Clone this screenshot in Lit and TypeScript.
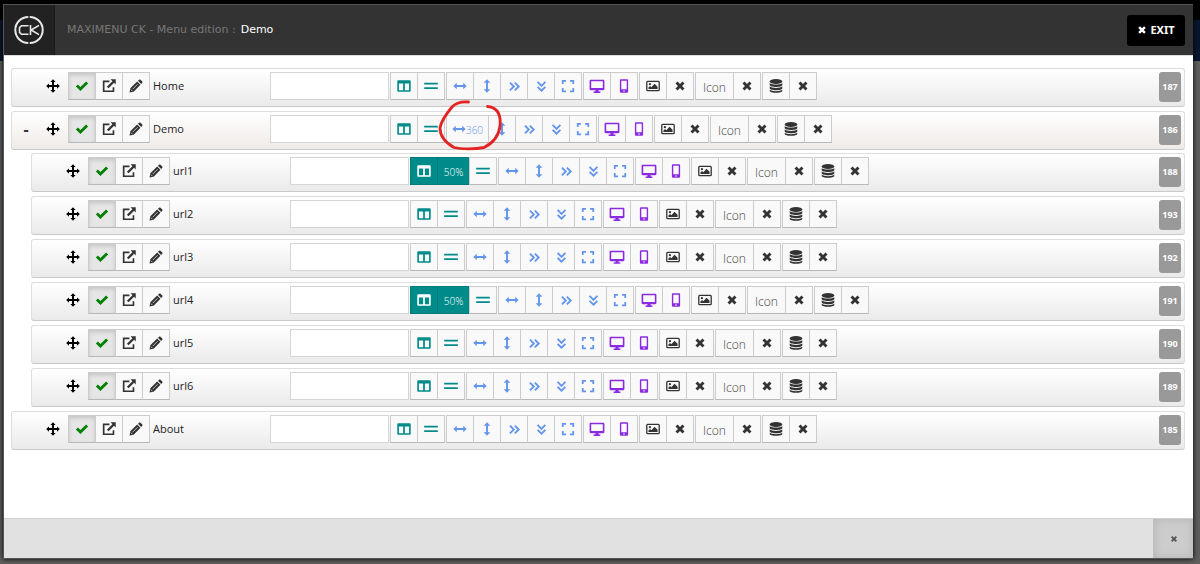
import { LitElement, html, svg, css, nothing } from "lit";
import { customElement, property } from "lit/decorators.js";

const ICONS: Record<string, any> = {
  move: svg`<path d="M8 0.2L11 3.4H9.100v3.500h3.500V5L15.800 8l-3.200 3V9.100H9.100v3.500H11L8 15.800 5 12.600h1.900V9.100H3.400V11L0.200 8l3.200-3v1.900h3.500V3.400H5z"/>`,
  check: svg`<path d="M1 8.600L3.300 6.300 6.200 9.100 12.700 2.800 15 5.100 6.200 13.800z"/>`,
  open: svg`<path d="M8.500 2.800H1.900v11.200h11.200V9.500" fill="none" stroke="currentColor" stroke-width="1.900"/><path d="M9.800 0.400h5.900v5.900l-1.900-1.900-6.300 6.300-1.900-1.900 6.300-6.300z"/>`,
  edit: svg`<path d="M.6 15.400l.9-4.700 7.800-7.800 3.800 3.800-7.800 7.800zM10.200 2.100l1.100-1.100c.6-.6 1.400-.6 2 0l1.700 1.700c.6.6.6 1.400 0 2l-1.100 1.100z"/><path d="M4.200 11.600l5.600-5.600" stroke="#f9f9f9" stroke-width=".8"/><path d="M2 12l2 2" stroke="#f9f9f9" stroke-width=".8"/>`,
  columns: svg`<path fill-rule="evenodd" d="M1.700 1.400h12.600c.8 0 1.400.6 1.400 1.400v10.400c0 .8-.6 1.400-1.400 1.400H1.700c-.8 0-1.400-.6-1.400-1.400V2.800c0-.8.6-1.400 1.400-1.400zM2.200 5v7.800h4.800V5zM9 5v7.800h4.800V5z"/>`,
  rows: svg`<path d="M.2 4.400h15.600v2H.2zM.2 9.400h15.600v2H.2z"/>`,
  width: svg`<path d="M.4 8l3.900-3.800v2.700h7.400V4.200L15.600 8l-3.900 3.800V9.100H4.300v2.700z"/>`,
  height: svg`<path d="M8 .4l3.800 3.900H9.100v7.400h2.700L8 15.600l-3.800-3.900h2.700V4.300H4.200z"/>`,
  right: svg`<path d="M2.400 3.200L7.200 8l-4.800 4.800M8.400 3.200L13.200 8l-4.800 4.800" fill="none" stroke="currentColor" stroke-width="2.300"/>`,
  down: svg`<path d="M3.200 2.400L8 7.200l4.800-4.800M3.200 8.400L8 13.200l4.800-4.800" fill="none" stroke="currentColor" stroke-width="2.300"/>`,
  expand: svg`<path d="M2 5.700V2h3.700M10.300 2H14v3.700M14 10.300V14h-3.700M5.700 14H2v-3.700" fill="none" stroke="currentColor" stroke-width="2"/>`,
  desktop: svg`<path fill-rule="evenodd" d="M1.300.8h13.400c.7 0 1.200.5 1.200 1.200v8.700c0 .7-.5 1.200-1.200 1.200H9.500l.4 1.500h1.700v1.400H4.400v-1.400h1.700l.4-1.500H1.300C.6 11.900.1 11.400.1 10.700V2C.1 1.300.6.8 1.300.8zM1.800 2.400v7.200h12.400V2.400z"/>`,
  mobile: svg`<path fill-rule="evenodd" d="M4.800.3h6.400c.9 0 1.500.6 1.500 1.500v12.400c0 .9-.6 1.500-1.500 1.500H4.800c-.9 0-1.500-.6-1.500-1.500V1.800c0-.9.6-1.500 1.500-1.500zM4.900 2v9.800h6.200V2zM8 12.800a.9.9 0 100 1.800.9.9 0 000-1.800z"/>`,
  image: svg`<rect x=".9" y="2.700" width="14.200" height="10.600" rx="1" fill="none" stroke="currentColor" stroke-width="1.500"/><circle cx="4.500" cy="5.900" r="1.300"/><path d="M2.800 11.500V9.800l1.900-1.700 1.400 1.300 3.700-3.900 3.400 3.400v2.600z"/>`,
  times: svg`<path d="M2 4.700L4.700 2 8 5.300 11.300 2 14 4.700 10.700 8l3.300 3.300-2.700 2.700L8 10.700 4.700 14 2 11.300 5.300 8z"/>`,
  database: svg`<ellipse cx="8" cy="2.900" rx="7.200" ry="2.800"/><path d="M.8 4.900c2 2 12.400 2 14.400 0v2c0 3-14.400 3-14.400 0zM.8 8.700c2 2 12.400 2 14.400 0v2c0 3-14.400 3-14.400 0zM.8 12.400c2 2 12.400 2 14.400 0v1c0 3.200-14.400 3.200-14.400 0z"/>`,
};

const icon = (name: string) =>
  html`<svg class="icon ${name}" viewBox="0 0 16 16" fill="currentColor" aria-hidden="true">${ICONS[name]}</svg>`;

interface Item {
  id: number;
  title: string;
  column?: string;
  width?: string;
  children?: Item[];
}

const ITEMS: Item[] = [
  { id: 187, title: "Home" },
  {
    id: 186,
    title: "Demo",
    width: "360",
    children: [
      { id: 188, title: "url1", column: "50%" },
      { id: 193, title: "url2" },
      { id: 192, title: "url3" },
      { id: 191, title: "url4", column: "50%" },
      { id: 190, title: "url5" },
      { id: 189, title: "url6" },
    ],
  },
  { id: 185, title: "About" },
];

@customElement("menu-row")
class MenuRow extends LitElement {
  @property({ attribute: false }) item!: Item;

  static styles = css`
    :host {
      display: block;
    }
    .row {
      box-sizing: border-box;
      height: 39px;
      padding: 3px 3px 0 6px;
      display: flex;
      align-items: flex-start;
      border: 1px solid #dedede;
      border-bottom-color: #c9c9c9;
      border-radius: 3px;
      background: linear-gradient(#fff, #eaeaea);
    }
    .row.parent {
      background: linear-gradient(#fff, #efebe8);
    }
    button,
    input {
      box-sizing: border-box;
      margin: 0;
      font-family: "Open Sans", "Noto Sans", sans-serif;
    }
    .toggle {
      width: 16px;
      height: 28px;
      padding: 0;
      border: 0;
      background: none;
      font-size: 16px;
      font-weight: 700;
      color: #333;
    }
    .toggle.empty {
      visibility: hidden;
    }
    .grip {
      width: 16px;
      height: 28px;
      margin-left: 11px;
      padding: 0;
      border: 0;
      background: none;
      display: grid;
      place-items: center;
      color: #000;
    }
    .group {
      display: flex;
      flex: none;
    }
    .status {
      margin-left: 7px;
    }
    .btn {
      width: 28px;
      height: 28px;
      padding: 0;
      border: 1px solid #ccc;
      border-bottom-color: #b8b8b8;
      background: #f9f9f9;
      display: flex;
      align-items: center;
      justify-content: center;
      font-size: 11px;
      font-weight: 300;
      color: #333;
    }
    .btn + .btn {
      margin-left: -1px;
    }
    .btn.on {
      background: #e6e6e6;
      box-shadow: inset 0 2px 4px rgba(0, 0, 0, 0.15);
      color: green;
    }
    .btn.teal {
      color: #008b8b;
    }
    .btn.blue {
      color: #6495ed;
    }
    .btn.wide {
      width: 43px;
    }
    .btn.purple {
      color: #8a2be2;
    }
    .btn.filled {
      background: #008b8b;
      border-color: #007a7a;
      color: #fff;
    }
    .btn.size {
      width: 33px;
      padding-top: 2px;
      font-size: 10px;
    }
    .btn.label {
      width: 39px;
      padding-top: 2px;
      font-size: 12px;
      color: #444;
    }
    .value {
      padding-top: 2px;
      font-size: 10px;
    }
    .title {
      box-sizing: border-box;
      width: 120px;
      padding-left: 3px;
      font: 11px/28px "Open Sans", "Noto Sans", sans-serif;
      color: #222;
    }
    .desc {
      width: 119px;
      height: 28px;
      border: 1px solid #d5d5d5;
      background: #fff;
      padding: 0 6px;
      font-size: 11px;
    }
    .tools {
      display: flex;
      gap: 1px;
      margin-left: 1px;
    }
    .badge {
      box-sizing: border-box;
      flex: none;
      width: 22px;
      height: 30px;
      margin-left: auto;
      border-radius: 3px;
      background: #999;
      color: #fff;
      font: 700 9px/30px "Open Sans", "Noto Sans", sans-serif;
      text-align: center;
    }
    .icon {
      width: 14px;
      height: 14px;
      flex: none;
      display: block;
    }
    .icon.desktop {
      width: 16px;
      height: 15px;
    }
    .icon.times {
      width: 12px;
      height: 12px;
    }
    .icon.right,
    .icon.down {
      width: 13px;
      height: 13px;
    }
  `;

  private btn(name: string, label: string, tone = "") {
    return html`<button class="btn ${tone}" aria-label=${label}>${icon(name)}</button>`;
  }

  render() {
    const { id, title, column, width, children } = this.item;
    return html`
      <div class="row ${children ? "parent" : ""}">
        <button class="toggle ${children ? "" : "empty"}" aria-label="Collapse">-</button>
        <button class="grip" aria-label="Move">${icon("move")}</button>
        <div class="group status">
          ${this.btn("check", "Published", "on")} ${this.btn("open", "Open")}
          ${this.btn("edit", "Edit")}
        </div>
        <label class="title" for="desc">${title}</label>
        <input class="desc" id="desc" type="text" />
        <div class="tools">
          <div class="group">
            ${this.btn("columns", "Column", column ? "filled" : "teal")}
            ${column ? html`<button class="btn filled size">${column}</button>` : nothing}
            ${this.btn("rows", "New row", "teal")}
          </div>
          <div class="group">
            <button class="btn blue ${width ? "wide" : ""}" aria-label="Width">
              ${icon("width")}${width ? html`<span class="value">${width}</span>` : nothing}
            </button>
            ${this.btn("height", "Height", "blue")} ${this.btn("right", "Left margin", "blue")}
            ${this.btn("down", "Top margin", "blue")} ${this.btn("expand", "Full width", "blue")}
          </div>
          <div class="group">
            ${this.btn("desktop", "Desktop", "purple")} ${this.btn("mobile", "Mobile", "purple")}
          </div>
          <div class="group">
            ${this.btn("image", "Image")} ${this.btn("times", "Remove image")}
          </div>
          <div class="group">
            <button class="btn label">Icon</button>
            ${this.btn("times", "Remove icon")}
          </div>
          <div class="group">
            ${this.btn("database", "Module")} ${this.btn("times", "Remove module")}
          </div>
        </div>
        <span class="badge">${id}</span>
      </div>
    `;
  }
}

@customElement("app-root")
class AppRoot extends LitElement {
  static styles = css`
    :host {
      display: block;
      box-sizing: border-box;
      height: 100vh;
      padding: 4px 7px 5px 3px;
      background: linear-gradient(#000 20px, #0a1630 20px, #0a1630 61px, #605f5d 61px);
      font-family: "Open Sans", "Noto Sans", sans-serif;
    }
    .modal {
      position: relative;
      box-sizing: border-box;
      height: 100%;
      display: flex;
      flex-direction: column;
      border: 1px solid #555;
      border-right-width: 0;
      background: #fff;
      box-shadow: 0 0 5px #000;
    }
    header {
      flex: none;
      height: 51px;
      display: flex;
      align-items: center;
      background: #333;
      border-bottom: 1px solid #ddd;
      box-sizing: border-box;
      padding-right: 8px;
    }
    .logo {
      width: 51px;
      align-self: stretch;
      display: grid;
      place-items: center;
      background: #222;
      border-right: 1px solid #1a1a1a;
      box-sizing: border-box;
    }
    h1 {
      margin: 0 0 0 12px;
      font: 11px/16px "DejaVu Sans", sans-serif;
      color: #777;
      display: flex;
      gap: 5px;
    }
    .current {
      color: #fff;
    }
    .exit {
      margin-left: auto;
      width: 58px;
      height: 31px;
      padding: 0;
      border: 0;
      border-radius: 3px;
      background: #000;
      color: #fff;
      display: flex;
      align-items: center;
      justify-content: center;
      gap: 3px;
      font: 700 11px/16px "Noto Sans", sans-serif;
    }
    .exit .icon {
      width: 10px;
      height: 10px;
    }
    main {
      flex: 1;
      min-height: 0;
      padding: 12px 8px 0 7px;
      overflow: hidden;
    }
    ul {
      list-style: none;
      margin: 0;
      padding: 0;
      display: flex;
      flex-direction: column;
      gap: 4px;
    }
    .nested {
      margin-top: 3px;
      padding-left: 20px;
    }
    footer {
      box-sizing: border-box;
      flex: none;
      height: 40px;
      display: flex;
      justify-content: flex-end;
      background: #e1e1e1;
      border-top: 1px solid #d0d0d0;
    }
    .close {
      width: 40px;
      padding: 0;
      border: 0;
      border-left: 1px solid #c0c0c0;
      background: #ccc;
      box-shadow: inset 0 0 8px rgba(0, 0, 0, 0.12);
      display: grid;
      place-items: center;
      color: #555;
    }
    .close .icon {
      width: 8px;
      height: 8px;
    }
    .mark {
      position: absolute;
      left: 434px;
      top: 93px;
      width: 66px;
      height: 60px;
      pointer-events: none;
    }
  `;

  private list(items: Item[], nested = false): unknown {
    return html`<ul class=${nested ? "nested" : ""}>
      ${items.map(
        (item) => html`<li>
          <menu-row .item=${item}></menu-row>
          ${item.children ? this.list(item.children, true) : nothing}
        </li>`
      )}
    </ul>`;
  }

  render() {
    return html`
      <div class="modal">
        <header>
          <div class="logo">
            <svg width="30" height="30" viewBox="0 0 30 30" fill="none" stroke="#e8e8e8" stroke-width="2">
              <path d="M14.300 2A13 13 0 0 0 14.300 28M15.700 28A13 13 0 0 0 15.700 2" />
              <path d="M14.500 10.700H7.500L5.500 12.700V17.300L7.500 19.300H14.500M16.500 10V20M25 10.400L18 14.500V15.500L25 19.600" stroke-width="1.600" />
            </svg>
          </div>
          <h1><span>MAXIMENU CK - Menu edition :</span><span class="current">Demo</span></h1>
          <button class="exit">${icon("times")}EXIT</button>
        </header>
        <main>${this.list(ITEMS)}</main>
        <footer>
          <button class="close" aria-label="Close">${icon("times")}</button>
        </footer>
        <svg class="mark" viewBox="438 98 66 60" fill="none" stroke="#e32222" stroke-width="2.800" stroke-linecap="round" aria-hidden="true">
          <path d="M468.500 102C462 101.500 456 102.500 452 107C447 113 441 121 440 128C440 136 446 143 454 147.500C462 149.500 476 149 484 147.500C493 143 499 135 500 126C501 117 499 107.500 487.500 106.500" />
        </svg>
      </div>
    `;
  }
}
